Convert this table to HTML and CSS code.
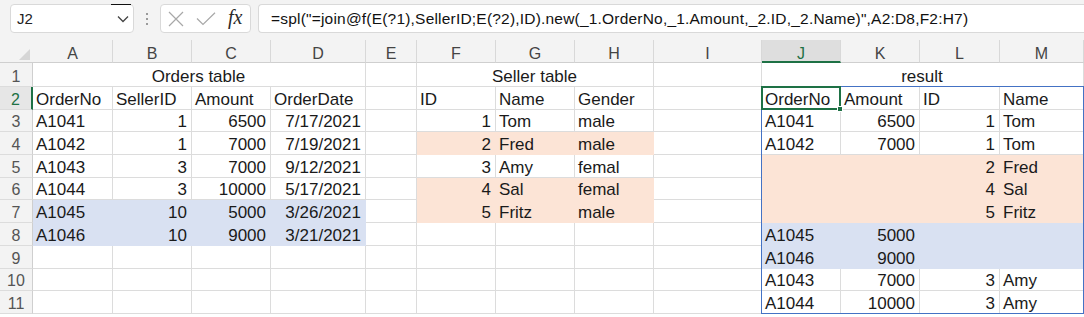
FILE: index.html
```html
<!DOCTYPE html>
<html>
<head>
<meta charset="utf-8">
<link rel="stylesheet" href="styles.css">
</head>
<body>
<div class="toolbar">
  <div class="namebox">
    <span class="nb-text">J2</span>
    <span class="nb-mark"></span>
    <svg class="chev" width="12" height="8" viewBox="0 0 12 8"><path d="M1 1.5 L6 6.5 L11 1.5" fill="none" stroke="#444" stroke-width="1.3"/></svg>
  </div>
  <div class="dots"><i></i><i></i><i></i></div>
  <div class="fxbox">
    <svg class="ico-x" width="16" height="16" viewBox="0 0 16 16"><path d="M1 1 L15 15 M15 1 L1 15" stroke="#a8a8a8" stroke-width="1.2" fill="none"/></svg>
    <svg class="ico-ok" width="20" height="14" viewBox="0 0 20 14"><path d="M1 6.5 L7 12.5 L19 0.8" stroke="#a8a8a8" stroke-width="1.2" fill="none"/></svg>
    <span class="fx">fx</span>
  </div>
  <div class="formula">=spl("=join@f(E(?1),SellerID;E(?2),ID).new(_1.OrderNo,_1.Amount,_2.ID,_2.Name)",A2:D8,F2:H7)</div>
</div>

<div class="sheet">
  <div class="row head">
    <div class="ch corner"><span class="tri"></span></div>
    <div class="ch">A</div><div class="ch">B</div><div class="ch">C</div><div class="ch">D</div>
    <div class="ch">E</div><div class="ch">F</div><div class="ch">G</div><div class="ch">H</div>
    <div class="ch">I</div><div class="ch sel">J</div><div class="ch">K</div><div class="ch">L</div><div class="ch">M</div>
  </div>

  <div class="row first">
    <div class="rh">1</div>
    <div class="c ctr span4">Orders table</div>
    <div class="c"></div>
    <div class="c ctr span3">Seller table</div>
    <div class="c"></div>
    <div class="c ctr span4">result</div>
  </div>

  <div class="row">
    <div class="rh sel">2</div>
    <div class="c">OrderNo</div><div class="c">SellerID</div><div class="c">Amount</div><div class="c">OrderDate</div>
    <div class="c"></div>
    <div class="c">ID</div><div class="c">Name</div><div class="c">Gender</div>
    <div class="c"></div>
    <div class="c anchor">OrderNo<span class="result-box"></span><span class="cursor"><span class="handle"></span></span></div>
    <div class="c">Amount</div><div class="c">ID</div><div class="c">Name</div>
  </div>

  <div class="row">
    <div class="rh">3</div>
    <div class="c">A1041</div><div class="c r">1</div><div class="c r">6500</div><div class="c r">7/17/2021</div>
    <div class="c"></div>
    <div class="c r">1</div><div class="c">Tom</div><div class="c">male</div>
    <div class="c"></div>
    <div class="c">A1041</div><div class="c r">6500</div><div class="c r">1</div><div class="c">Tom</div>
  </div>

  <div class="row">
    <div class="rh">4</div>
    <div class="c">A1042</div><div class="c r">1</div><div class="c r">7000</div><div class="c r">7/19/2021</div>
    <div class="c"></div>
    <div class="c r pe">2</div><div class="c pe">Fred</div><div class="c pe">male</div>
    <div class="c"></div>
    <div class="c">A1042</div><div class="c r">7000</div><div class="c r">1</div><div class="c">Tom</div>
  </div>

  <div class="row">
    <div class="rh">5</div>
    <div class="c">A1043</div><div class="c r">3</div><div class="c r">7000</div><div class="c r">9/12/2021</div>
    <div class="c"></div>
    <div class="c r">3</div><div class="c">Amy</div><div class="c">femal</div>
    <div class="c"></div>
    <div class="c pe"></div><div class="c pe"></div><div class="c r pe">2</div><div class="c pe">Fred</div>
  </div>

  <div class="row">
    <div class="rh">6</div>
    <div class="c">A1044</div><div class="c r">3</div><div class="c r">10000</div><div class="c r">5/17/2021</div>
    <div class="c"></div>
    <div class="c r pe">4</div><div class="c pe">Sal</div><div class="c pe">femal</div>
    <div class="c"></div>
    <div class="c pe"></div><div class="c pe"></div><div class="c r pe">4</div><div class="c pe">Sal</div>
  </div>

  <div class="row">
    <div class="rh">7</div>
    <div class="c bl">A1045</div><div class="c r bl">10</div><div class="c r bl">5000</div><div class="c r bl">3/26/2021</div>
    <div class="c"></div>
    <div class="c r pe">5</div><div class="c pe">Fritz</div><div class="c pe">male</div>
    <div class="c"></div>
    <div class="c pe"></div><div class="c pe"></div><div class="c r pe">5</div><div class="c pe">Fritz</div>
  </div>

  <div class="row">
    <div class="rh">8</div>
    <div class="c bl">A1046</div><div class="c r bl">10</div><div class="c r bl">9000</div><div class="c r bl">3/21/2021</div>
    <div class="c"></div>
    <div class="c"></div><div class="c"></div><div class="c"></div>
    <div class="c"></div>
    <div class="c bl">A1045</div><div class="c r bl">5000</div><div class="c bl"></div><div class="c bl"></div>
  </div>

  <div class="row">
    <div class="rh">9</div>
    <div class="c"></div><div class="c"></div><div class="c"></div><div class="c"></div>
    <div class="c"></div>
    <div class="c"></div><div class="c"></div><div class="c"></div>
    <div class="c"></div>
    <div class="c bl">A1046</div><div class="c r bl">9000</div><div class="c bl"></div><div class="c bl"></div>
  </div>

  <div class="row">
    <div class="rh">10</div>
    <div class="c"></div><div class="c"></div><div class="c"></div><div class="c"></div>
    <div class="c"></div>
    <div class="c"></div><div class="c"></div><div class="c"></div>
    <div class="c"></div>
    <div class="c">A1043</div><div class="c r">7000</div><div class="c r">3</div><div class="c">Amy</div>
  </div>

  <div class="row">
    <div class="rh">11</div>
    <div class="c"></div><div class="c"></div><div class="c"></div><div class="c"></div>
    <div class="c"></div>
    <div class="c"></div><div class="c"></div><div class="c"></div>
    <div class="c"></div>
    <div class="c">A1044</div><div class="c r">10000</div><div class="c r">3</div><div class="c">Amy</div>
  </div>
</div>
</body>
</html>
```

FILE: styles.css
```css
* { box-sizing: border-box; }
html, body { margin: 0; padding: 0; }
body {
  width: 1084px;
  height: 317px;
  overflow: hidden;
  background: #ffffff;
  font-family: "Liberation Sans", Arial, sans-serif;
  color: #1a1a1a;
}

/* ---------- toolbar ---------- */
.toolbar {
  height: 38px;
  background: #f3f3f3;
  display: flex;
  align-items: flex-start;
  padding: 4px 0 0 10px;
}
.namebox {
  position: relative;
  width: 124px;
  height: 29px;
  background: #fff;
  border: 1px solid #d9d9d9;
  border-radius: 4px;
  display: flex;
  align-items: center;
  padding-left: 6px;
}
.nb-text { font-size: 15px; color: #222; flex: 1; }
.nb-mark {
  position: absolute;
  top: -1px;
  right: 2px;
  width: 20px;
  height: 1px;
  background: #111;
}
.chev { margin-right: 4px; }
.dots {
  width: 26px;
  height: 29px;
  display: flex;
  flex-direction: column;
  align-items: center;
  justify-content: center;
  gap: 3px;
}
.dots i {
  display: block;
  width: 2px;
  height: 2px;
  background: #9a9a9a;
}
.fxbox {
  width: 91px;
  height: 29px;
  background: #fff;
  border: 1px solid #d9d9d9;
  border-radius: 4px;
  display: flex;
  align-items: center;
  padding-left: 7px;
}
.ico-x { margin-right: 12px; }
.ico-ok { margin-right: 12px; }
.fx {
  font-family: "Liberation Serif", "DejaVu Serif", serif;
  font-style: italic;
  font-size: 20px;
  color: #2a2a2a;
  line-height: 1;
  margin-top: -3px;
}
.formula {
  flex: 1;
  margin-left: 7px;
  height: 29px;
  background: #fff;
  border: 1px solid #d9d9d9;
  border-right: none;
  border-radius: 4px 0 0 4px;
  padding-left: 12px;
  font-size: 15.5px;
  letter-spacing: 0.2px;
  line-height: 27px;
  color: #111;
  white-space: nowrap;
  overflow: hidden;
}

/* ---------- sheet ---------- */
.row {
  display: grid;
  grid-template-columns: 33px 80px 79px 79px 95px 51px 79px 79px 79px 108px 79px 79px 80px 84px;
  height: 22.7px;
}
.row.first { height: 24px; }
.row.head { height: 25px; background: #f3f3f3; }

.ch {
  border-right: 1px solid #d8d8d8;
  border-bottom: 1px solid #cfcfcf;
  font-size: 16px;
  color: #444;
  text-align: center;
  line-height: 18px;
  padding-top: 5px;
  margin-top: 2px;
  height: 23px;
}
.ch.corner {
  position: relative;
  border-right: none;
}
.tri {
  position: absolute;
  right: 3px;
  bottom: 2px;
  width: 0;
  height: 0;
  border-left: 11px solid transparent;
  border-bottom: 11px solid #d6d6d6;
}
.ch.sel {
  background: #dedede;
  color: #1e7145;
  border-bottom: 2px solid #1e7145;
}

.rh {
  background: #f3f3f3;
  border-right: 1px solid #cfcfcf;
  border-bottom: 1px solid #dcdcdc;
  font-size: 16px;
  color: #555;
  display: flex;
  align-items: flex-end;
  justify-content: center;
  line-height: 18px;
}
.rh.sel {
  color: #1e7145;
  background: #e6e6e6;
  border-right: 2px solid #1e7145;
}

.c {
  border-right: 1px solid #dcdcdc;
  border-bottom: 1px solid #dcdcdc;
  font-size: 17px;
  line-height: 19px;
  display: flex;
  align-items: flex-end;
  padding: 0 4px 0 3px;
  white-space: nowrap;
  color: #1a1a1a;
}
.c.r { justify-content: flex-end; }
.c.ctr { justify-content: center; }
.span4 { grid-column: span 4; }
.span3 { grid-column: span 3; }

.pe { background: #fce4d6; border-color: #fce4d6; }
.bl { background: #d9e1f2; border-color: #d9e1f2; }

.anchor { position: relative; }
.result-box {
  position: absolute;
  left: -1px;
  top: -1px;
  width: 323px;
  height: 228px;
  border: 1px solid #4472c4;
  pointer-events: none;
  z-index: 1;
}
.cursor {
  position: absolute;
  left: -1px;
  top: -1px;
  right: -1px;
  bottom: -1px;
  border: 2px solid #1e7145;
  z-index: 2;
}
.handle {
  position: absolute;
  right: -4px;
  bottom: -4px;
  width: 6px;
  height: 6px;
  background: #1e7145;
  border: 1px solid #fff;
}
```
